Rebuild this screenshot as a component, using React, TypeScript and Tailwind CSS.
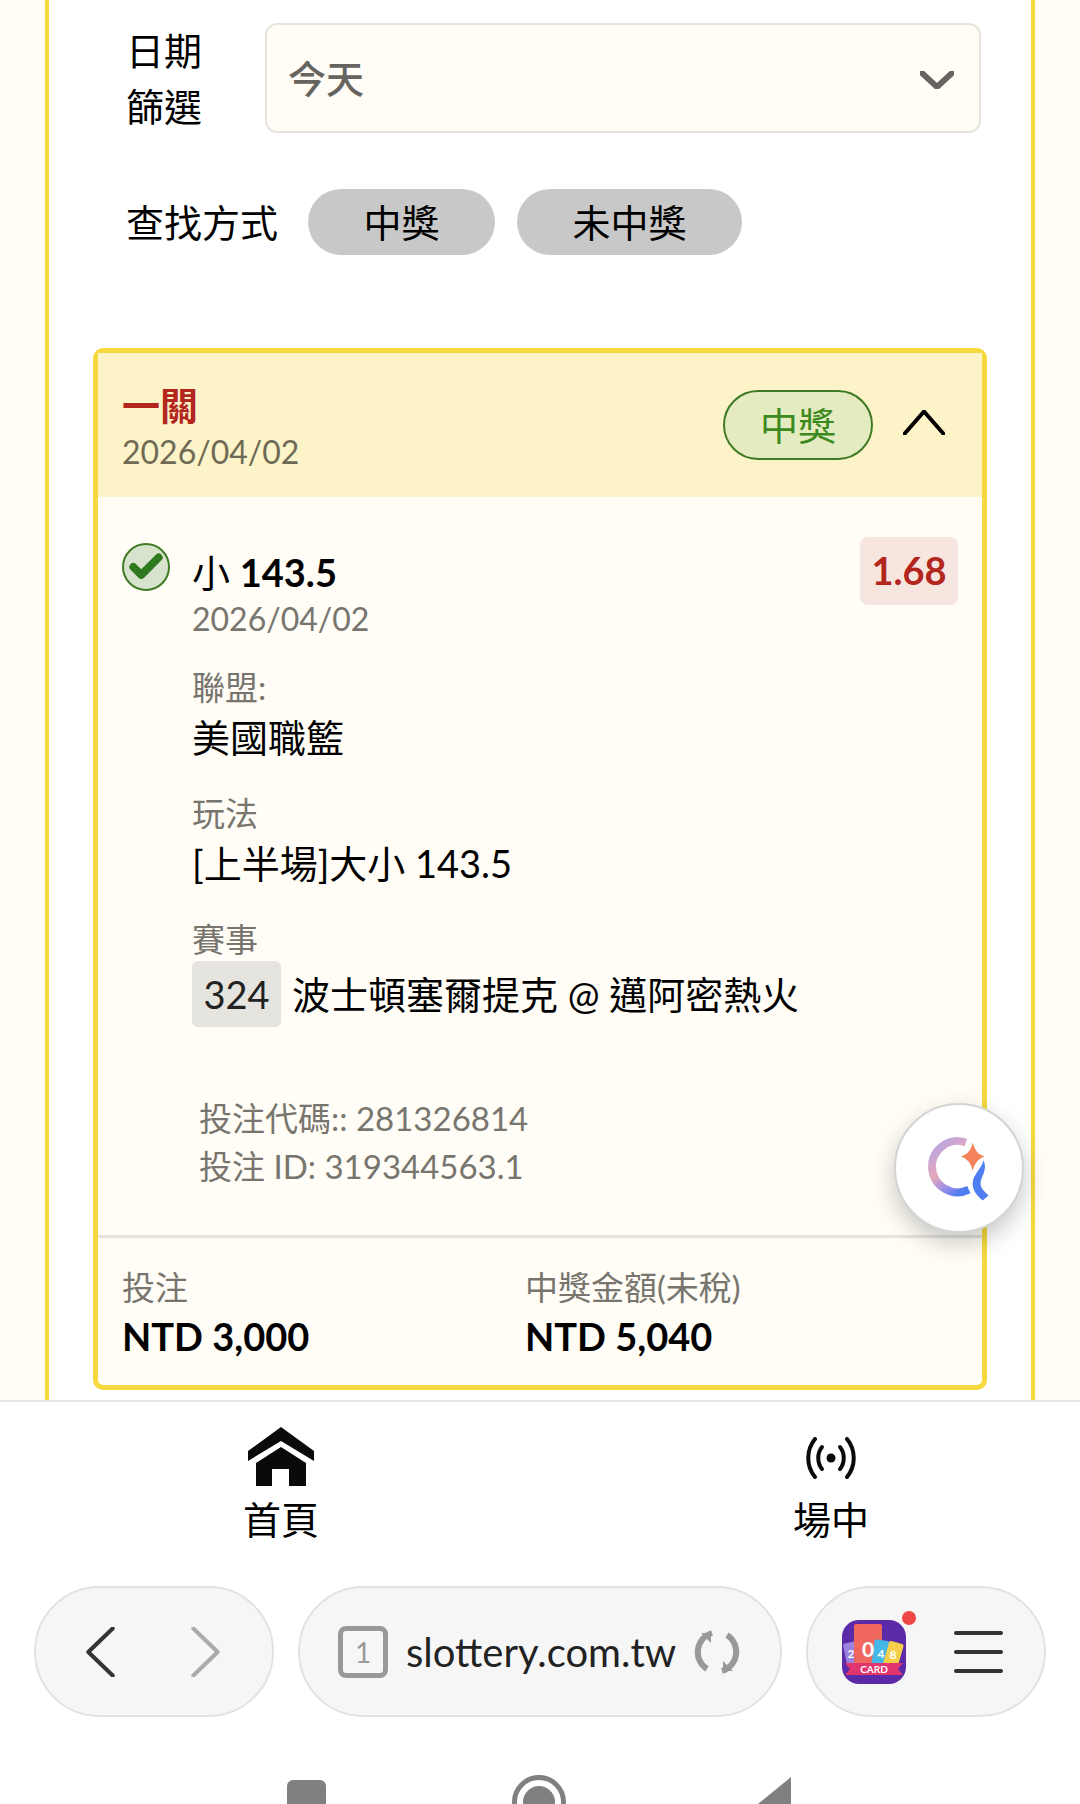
import React from 'react';
import { Check } from 'lucide-react';

const font = { fontFamily: 'Lato, "Noto Sans CJK TC", sans-serif' };

function DetailBlock({ label, value }: { label: string; value: string }) {
  return (
    <div>
      <p className="text-[33px] leading-[44px] text-[#77756e]">{label}</p>
      <p className="mt-[3px] text-[38px] leading-[50px] text-black">{value}</p>
    </div>
  );
}

function Chevron({ points, color, width, height, stroke }: { points: string; color: string; width: string; height: string; stroke: number }) {
  return (
    <svg viewBox="0 0 100 100" preserveAspectRatio="none" className={`${width} ${height} shrink-0`}>
      <polyline points={points} fill="none" stroke={color} strokeWidth={stroke} strokeLinejoin="round" strokeLinecap="round" vectorEffect="non-scaling-stroke" />
    </svg>
  );
}

function HomeIcon() {
  return (
    <svg viewBox="0 0 66 59" className="w-[66px] h-[59px]">
      <path d="M33 0L66 24v10L33 14 0 34V24z" fill="#0a0a0a" />
      <path d="M33 20L58 36v23H41V42H24v17H8V36z" fill="#0a0a0a" />
    </svg>
  );
}

function LiveIcon() {
  return (
    <svg viewBox="0 0 50 42" fill="none" stroke="#0a0a0a" strokeWidth="4" strokeLinecap="round" className="w-[50px] h-[42px]">
      <circle cx="25" cy="21" r="4.5" fill="#0a0a0a" stroke="none" />
      <path d="M16 10c-5 6-5 16 0 22" />
      <path d="M34 10c5 6 5 16 0 22" />
      <path d="M9 2c-9 11-9 27 0 38" />
      <path d="M41 2c9 11 9 27 0 38" />
    </svg>
  );
}

function AssistantButton() {
  return (
    <div className="absolute left-[894px] top-[1103px] w-[130px] h-[130px] rounded-full bg-white border-2 border-[#d4d4d2] shadow-[0_10px_24px_rgba(0,0,0,0.22)] flex items-center justify-center">
      <svg viewBox="2 0 128 128" className="w-[128px] h-[128px]">
        <defs>
          <linearGradient id="arc" x1="0.2" y1="0" x2="0.8" y2="1">
            <stop offset="0" stopColor="#b9a5e0" />
            <stop offset="0.45" stopColor="#e5a9bd" />
            <stop offset="0.75" stopColor="#9a8fe6" />
            <stop offset="1" stopColor="#4f7df2" />
          </linearGradient>
        </defs>
        <path d="M73 38A26 26 0 1 0 76 86" fill="none" stroke="url(#arc)" strokeWidth="8" />
        <path d="M80 38C82 46 85 50 92 52 85 55 82 59 80 67 78 59 75 55 68 52 75 50 78 46 80 38z" fill="#f4825a" />
        <path d="M91 56C95 66 89 72 88 78 87 84 92 88 96 92L90 97C84 92 79 86 80 78 81 70 88 66 91 56z" fill="#4f7df2" />
      </svg>
    </div>
  );
}

function AppIcon() {
  return (
    <svg viewBox="0 0 64 64" className="w-[64px] h-[64px]">
      <rect width="64" height="64" rx="17" fill="#5b2aa8" />
      <rect x="3" y="22" width="16" height="24" rx="2" fill="#9a84dd" transform="rotate(-12 11 34)" />
      <rect x="12" y="4" width="28" height="40" rx="2" fill="#f0685d" />
      <rect x="31" y="20" width="15" height="26" rx="2" fill="#45b6e8" transform="rotate(8 38 33)" />
      <rect x="44" y="22" width="15" height="25" rx="2" fill="#f5cf4a" transform="rotate(16 51 34)" />
      <text x="9" y="38" fontSize="11" fontWeight="700" fill="#fff" textAnchor="middle" fontFamily="Lato">2</text>
      <text x="26" y="37" fontSize="21" fontWeight="700" fill="#fff" textAnchor="middle" fontFamily="Lato">0</text>
      <text x="39" y="38" fontSize="12" fontWeight="700" fill="#fff" textAnchor="middle" fontFamily="Lato">4</text>
      <text x="51" y="39" fontSize="12" fontWeight="700" fill="#fff" textAnchor="middle" fontFamily="Lato">8</text>
      <path d="M3 43h58l-5 6 5 6H3l5-6z" fill="#e0356f" />
      <text x="32" y="53" fontSize="10" fontWeight="700" fill="#fff" textAnchor="middle" fontFamily="Lato">CARD</text>
    </svg>
  );
}

export default function App() {
  return (
    <div className="relative flex flex-col w-[1080px] h-[1804px] overflow-hidden bg-white" style={font}>
      {/* Page content */}
      <div className="h-[1400px] shrink-0 bg-[#fffdf6] px-[45px] overflow-hidden">
        <div className="h-full bg-white border-x-[4px] border-[#f5d93f] px-[44px]">
          <div className="flex items-center pt-[22px] pl-[33px] pr-[6px]">
            <p className="w-[139px] shrink-0 pr-[60px] text-[38px] leading-[56px] text-black">日期篩選</p>
            <div className="flex-1 h-[110px] flex items-center justify-between pl-[21px] pr-[25px] rounded-[12px] border-2 border-[#e6e4dc] bg-[#fffdf6]">
              <span className="text-[38px] text-[#66645e] font-medium">今天</span>
              <div className="mt-[4px]">
                <Chevron points="6,12 50,88 94,12" color="#66645e" width="w-[34px]" height="h-[18px]" stroke={6} />
              </div>
            </div>
          </div>

          <div className="flex items-center mt-[55px] pl-[33px]">
            <p className="text-[38px] text-black">查找方式</p>
            <button className="ml-[30px] h-[66px] w-[187px] rounded-full bg-[#c8c8c8] text-[38px] text-black">中獎</button>
            <button className="ml-[22px] h-[66px] w-[225px] rounded-full bg-[#c8c8c8] text-[38px] text-black">未中獎</button>
          </div>

          {/* Bet card */}
          <div className="mt-[93px] rounded-[10px] border-[5px] border-[#f5d93f] bg-[#fffdf6]">
            <div className="h-[144px] flex items-center bg-[#fdf3c8] pl-[24px] pr-[37px]">
              <div className="flex-1 pt-[4px]">
                <p className="text-[38px] leading-[50px] font-bold text-[#b3261e]">一關</p>
                <p className="text-[32px] leading-[44px] text-[#6f6a55]">2026/04/02</p>
              </div>
              <div className="w-[150px] h-[70px] flex items-center justify-center rounded-full border-2 border-[#3f7a24] bg-[#e5ebc0] text-[38px] text-[#3c8a1e]">中獎</div>
              <div className="ml-[30px] mb-[6px]">
                <Chevron points="3,96 50,6 97,96" color="#000" width="w-[42px]" height="h-[25px]" stroke={4} />
              </div>
            </div>

            <div className="relative pl-[94px] pr-[24px] pt-[50px] h-[738px]">
              <div className="absolute left-[24px] top-[46px] w-[48px] h-[48px] rounded-full border-2 border-[#3f7a24] bg-[#d7e3cc] flex items-center justify-center">
                <Check className="w-[38px] h-[38px] text-[#2f7a1e]" strokeWidth={5} />
              </div>
              <div className="flex justify-between">
                <div>
                  <p className="text-[38px] leading-[50px] text-black">小 <span className="font-bold">143.5</span></p>
                  <p className="text-[32px] leading-[44px] text-[#77756e]">2026/04/02</p>
                </div>
                <div className="-mt-[10px] pb-[2px] w-[98px] h-[68px] flex items-center justify-center rounded-[8px] bg-[#f7e5df] text-[38px] font-bold text-[#b3261e]">1.68</div>
              </div>

              <div className="mt-[24px] flex flex-col gap-[29px]">
                <DetailBlock label="聯盟:" value="美國職籃" />
                <DetailBlock label="玩法" value="[上半場]大小 143.5" />
              </div>

              <p className="mt-[29px] text-[33px] leading-[44px] text-[#77756e]">賽事</p>
              <div className="flex items-center">
                <span className="w-[89px] h-[66px] flex items-center justify-center rounded-[6px] bg-[#e6e4de] text-[38px] text-[#222]">324</span>
                <span className="ml-[11px] text-[38px] text-black">波士頓塞爾提克 @ 邁阿密熱火</span>
              </div>

              <div className="mt-[67px] pl-[7px] text-[33px] leading-[48px] text-[#77756e]">
                <p>投注代碼:: 281326814</p>
                <p>投注 ID: 319344563.1</p>
              </div>
            </div>

            <div className="h-[3px] bg-[#e5e3dc]" />

            <div className="flex pl-[24px] h-[147px] pt-[26px]">
              <div className="w-[403px]">
                <p className="text-[33px] leading-[47px] text-[#77756e]">投注</p>
                <p className="text-[38px] leading-[50px] font-bold text-black">NTD 3,000</p>
              </div>
              <div>
                <p className="text-[33px] leading-[47px] text-[#77756e]">中獎金額(未稅)</p>
                <p className="text-[38px] leading-[50px] font-bold text-black">NTD 5,040</p>
              </div>
            </div>
          </div>
        </div>
      </div>

      <AssistantButton />

      {/* Bottom tabs */}
      <div className="h-[170px] shrink-0 border-t-2 border-[#e6e6e6] bg-white flex gap-[450px] pl-[231px]">
        <div className="w-[100px] flex flex-col items-center pt-[25px]">
          <HomeIcon />
          <span className="mt-[7px] text-[38px] leading-[52px] text-black">首頁</span>
        </div>
        <div className="w-[100px] flex flex-col items-center pt-[35px]">
          <LiveIcon />
          <span className="mt-[14px] text-[38px] leading-[52px] text-black">場中</span>
        </div>
      </div>

      {/* Browser toolbar */}
      <div className="mt-[16px] h-[131px] shrink-0 flex gap-[24px] px-[34px]">
        <div className="w-[240px] rounded-full border-2 border-[#e2e2e2] bg-[#f6f6f6] flex items-center pl-[50px]">
          <Chevron points="92,3 8,50 92,97" color="#333" width="w-[29px]" height="h-[50px]" stroke={4} />
          <div className="ml-[76px]">
            <Chevron points="8,3 92,50 8,97" color="#aaa" width="w-[29px]" height="h-[50px]" stroke={4} />
          </div>
        </div>
        <div className="w-[484px] rounded-full border-2 border-[#e2e2e2] bg-[#f6f6f6] flex items-center pl-[38px]">
          <span className="w-[50px] h-[52px] shrink-0 flex items-center justify-center rounded-[8px] border-[5px] border-[#999] text-[28px] text-[#999]">1</span>
          <span className="ml-[18px] whitespace-nowrap text-[40px] text-[#222]">slottery.com.tw</span>
          <svg viewBox="0 0 46 46" fill="none" stroke="#999" strokeWidth="6" className="ml-[18px] w-[46px] h-[46px] shrink-0">
            <path d="M18 4A20 20 0 0 0 13 40" />
            <path d="M28 42A20 20 0 0 0 33 6" />
            <path d="M6 7h10v10z" fill="#999" stroke="none" transform="translate(1 -3)" />
            <path d="M40 39H30V29z" fill="#999" stroke="none" transform="translate(-1 3)" />
          </svg>
        </div>
        <div className="relative w-[240px] rounded-full border-2 border-[#e2e2e2] bg-[#f6f6f6] flex items-center pl-[34px]">
          <AppIcon />
          <span className="absolute left-[94px] top-[23px] w-[14px] h-[14px] rounded-full bg-[#f04545]" />
          <div className="ml-[48px] flex flex-col gap-[15px]">
            <span className="block w-[49px] h-[4px] rounded-full bg-[#333]" />
            <span className="block w-[49px] h-[4px] rounded-full bg-[#333]" />
            <span className="block w-[49px] h-[4px] rounded-full bg-[#333]" />
          </div>
        </div>
      </div>

      {/* Android nav, cut off by the bottom edge */}
      <div className="mt-[63px] ml-[287px] flex items-start">
        <span className="block w-[39px] h-[60px] rounded-[6px] bg-[#808080]" />
        <span className="ml-[186px] -mt-[5px] block w-[54px] h-[54px] shrink-0 rounded-full border-[5px] border-[#808080] p-[6px]">
          <span className="block w-full h-full rounded-full bg-[#808080]" />
        </span>
        <svg viewBox="0 0 36 60" className="ml-[189px] -mt-[3px] w-[36px] h-[60px]">
          <path d="M36 0v60H0V34Q0 30 3 27z" fill="#808080" />
        </svg>
      </div>
    </div>
  );
}
